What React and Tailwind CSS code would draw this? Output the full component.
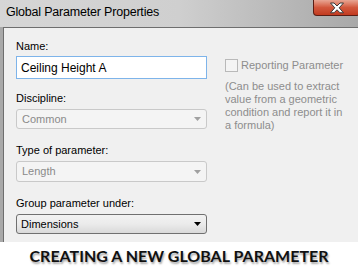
import React from "react";

function Combo({ value, disabled }) {
  return (
    <div
      className={
        disabled
          ? "mt-[3px] flex h-[20px] items-center justify-between rounded-[3px] border border-[#c9c9c9] bg-[#f4f4f4] pl-[5px] pr-[5px] text-[#8a8a8a]"
          : "mt-[3px] flex h-[20px] items-center justify-between rounded-[3px] border border-[#707070] bg-gradient-to-b from-[#f2f2f2] via-[#ebebeb] to-[#d9d9d9] pl-[4px] pr-[5px] text-black"
      }
    >
      <span>{value}</span>
      <svg width="7" height="4" viewBox="0 0 7 4">
        <path d="M0 0h7L3.5 4z" fill={disabled ? "#a0a0a0" : "#000"} />
      </svg>
    </div>
  );
}

function Label({ children, className = "" }) {
  return <div className={"leading-[15px] " + className}>{children}</div>;
}

export default function App() {
  return (
    <div className="h-[268px] w-[358px] overflow-hidden bg-white font-['Liberation_Sans',Arial,sans-serif]">
      <div className="flex h-[27px] items-start justify-between bg-gradient-to-r from-[#d6d6d6] via-[#cfcfcf] to-[#a8a8a8]">
        <div className="pl-[6px] pt-[5px] text-[12.5px] leading-[15px] tracking-[-0.2px] text-black">
          Global Parameter Properties
        </div>
        <div className="mr-[-2px] flex h-[16px] w-[47px] items-center justify-center rounded-b-[4px] border border-t-0 border-[#5a1d14] bg-gradient-to-b from-[#e8a593] via-[#d2573c] to-[#c23a1f]">
          <svg width="16" height="12" viewBox="0 0 16 12">
            <path
              d="M1.5 1h3.5l3 3 3-3h3.5l-4.3 4.8 4.3 5h-3.5l-3-3-3 3h-3.5l4.3-5z"
              fill="#fff"
              stroke="#3a3a3a"
              strokeWidth="1"
              strokeLinejoin="round"
            />
          </svg>
        </div>
      </div>
      <div className="flex h-[215px]">
        <div className="w-[3px] bg-[#a9a9a9]" />
        <div className="flex flex-1 border-l border-t border-[#6e6e6e] bg-[#f0f0f0] text-[11px]">
          <div className="ml-[12px] w-[191px] pt-[11px]">
            <Label>Name:</Label>
            <div className="mt-[2px] flex h-[23px] items-center border border-[#7eb4ea] bg-white pl-[4px] text-[12px] text-black">
              Ceiling Height A
            </div>
            <Label className="mt-[12px]">Discipline:</Label>
            <Combo value="Common" disabled />
            <Label className="mt-[14px]">Type of parameter:</Label>
            <div className="[&>div]:h-[21px]">
              <Combo value="Length" disabled />
            </div>
            <Label className="mt-[14px]">Group parameter under:</Label>
            <Combo value="Dimensions" />
          </div>
          <div className="ml-[18px] flex-1 pt-[29px] text-[11px] text-[#8d8d8d]">
            <div className="flex items-center gap-[3px]">
              <div className="h-[13px] w-[13px] border border-[#b9b9b9] bg-[#f4f4f4]" />
              <span>Reporting Parameter</span>
            </div>
            <div className="mt-[6px] pr-[8px] leading-[13px]">
              (Can be used to extract value from a geometric condition and report it in a formula)
            </div>
          </div>
        </div>
      </div>
      <div className="flex h-[26px] items-center justify-center pt-[1px] font-['Lato',sans-serif] text-[16px] font-bold text-[#111] [text-shadow:1px_2px_2px_rgba(0,0,0,0.35)]">
        CREATING A NEW GLOBAL PARAMETER
      </div>
    </div>
  );
}
